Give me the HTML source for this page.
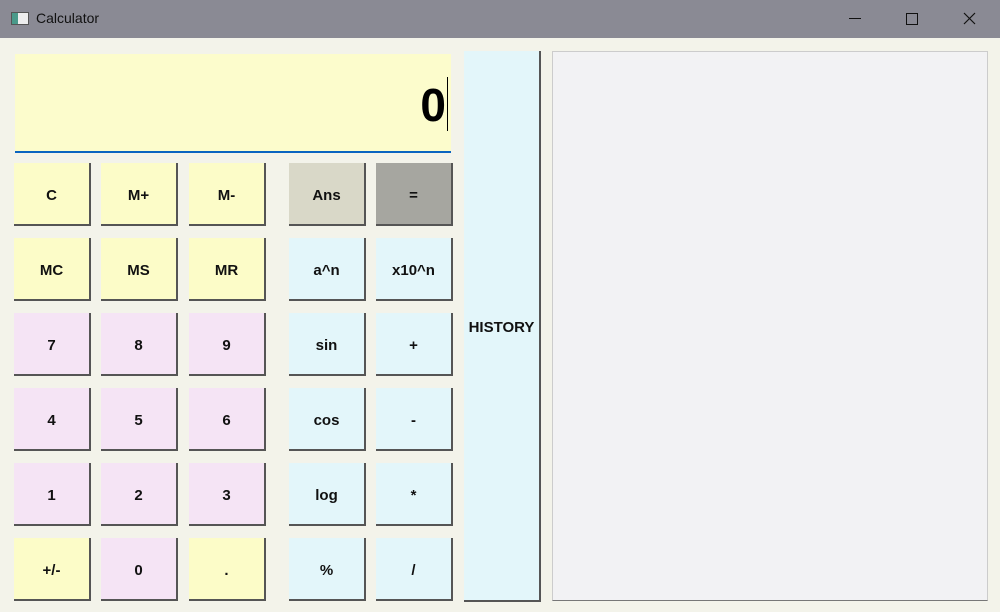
<!DOCTYPE html>
<html><head><style>
body{margin:0;width:1000px;height:612px;overflow:hidden;background:#f3f3ea;font-family:"Liberation Sans",sans-serif;position:relative}
.tb{position:absolute;left:0;top:0;width:1000px;height:38px;background:#8a8a94}
.t{position:absolute;left:36px;top:10px;font-size:14px;color:#111}
.b{position:absolute;width:77px;height:63px;box-sizing:border-box;border-right:2px solid #555;border-bottom:2px solid #555;font-weight:bold;font-size:15px;display:flex;align-items:center;justify-content:center;color:#111;padding-top:3px}
.y{background:#fcfcc8}.p{background:#f5e4f5}.c{background:#e3f6fa}
</style></head><body>
<div class="tb"></div>
<div style="position:absolute;left:11px;top:12px;width:16px;height:11px;background:#eee;border:1px solid #555"><div style="width:6px;height:11px;background:#4a9a8a"></div></div>
<div class="t">Calculator</div>
<div style="position:absolute;left:849px;top:18px;width:12px;height:1px;background:#111"></div>
<div style="position:absolute;left:906px;top:13px;width:10px;height:10px;border:1px solid #111"></div>
<svg style="position:absolute;left:963px;top:12px" width="13" height="13"><path d="M1 1L12 12M12 1L1 12" stroke="#111" stroke-width="1.2"/></svg>
<div style="position:absolute;left:15px;top:54px;width:436px;height:97px;background:#fcfccc;border-bottom:2px solid #0a64c0"></div>
<div style="position:absolute;left:380px;top:78px;width:66px;text-align:right;font-weight:bold;font-size:46px;color:#000">0</div>
<div style="position:absolute;left:447px;top:77px;width:1px;height:54px;background:#000"></div>
<div class="b y" style="left:14px;top:163px">C</div>
<div class="b y" style="left:101px;top:163px">M+</div>
<div class="b y" style="left:189px;top:163px">M-</div>
<div class="b" style="left:289px;top:163px;background:#d9d8c8">Ans</div>
<div class="b" style="left:376px;top:163px;background:#a6a6a0">=</div>
<div class="b y" style="left:14px;top:238px">MC</div>
<div class="b y" style="left:101px;top:238px">MS</div>
<div class="b y" style="left:189px;top:238px">MR</div>
<div class="b c" style="left:289px;top:238px">a^n</div>
<div class="b c" style="left:376px;top:238px">x10^n</div>
<div class="b p" style="left:14px;top:313px">7</div>
<div class="b p" style="left:101px;top:313px">8</div>
<div class="b p" style="left:189px;top:313px">9</div>
<div class="b c" style="left:289px;top:313px">sin</div>
<div class="b c" style="left:376px;top:313px">+</div>
<div class="b p" style="left:14px;top:388px">4</div>
<div class="b p" style="left:101px;top:388px">5</div>
<div class="b p" style="left:189px;top:388px">6</div>
<div class="b c" style="left:289px;top:388px">cos</div>
<div class="b c" style="left:376px;top:388px">-</div>
<div class="b p" style="left:14px;top:463px">1</div>
<div class="b p" style="left:101px;top:463px">2</div>
<div class="b p" style="left:189px;top:463px">3</div>
<div class="b c" style="left:289px;top:463px">log</div>
<div class="b c" style="left:376px;top:463px">*</div>
<div class="b y" style="left:14px;top:538px">+/-</div>
<div class="b p" style="left:101px;top:538px">0</div>
<div class="b y" style="left:189px;top:538px">.</div>
<div class="b c" style="left:289px;top:538px">%</div>
<div class="b c" style="left:376px;top:538px">/</div>
<div class="b c" style="left:464px;top:51px;width:77px;height:551px">HISTORY</div>
<div style="position:absolute;left:552px;top:51px;width:436px;height:550px;box-sizing:border-box;background:#f2f2f4;border:1px solid #ccc;border-bottom:1px solid #777"></div>
</body></html>
